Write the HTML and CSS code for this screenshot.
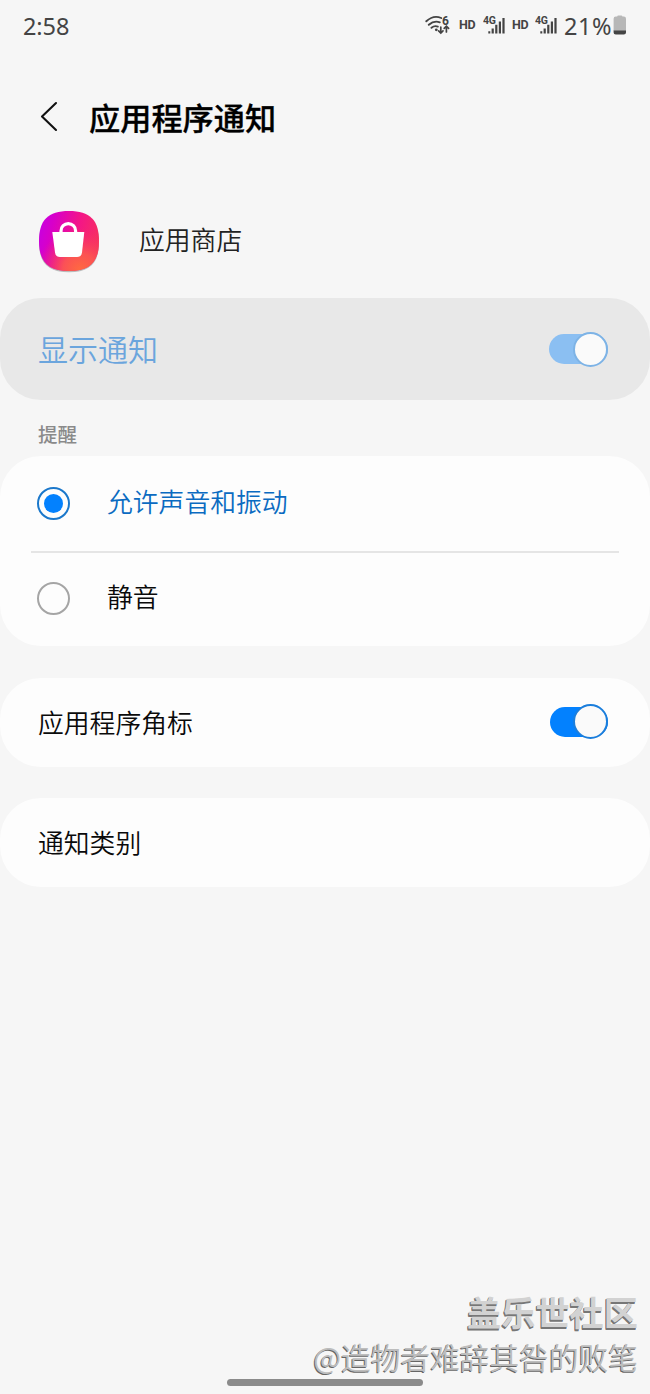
FILE: index.html
```html
<!DOCTYPE html>
<html lang="zh-CN">
<head>
<meta charset="utf-8">
<title>应用程序通知</title>
<link rel="stylesheet" href="styles.css">
</head>
<body>
<div class="screen">
  <header class="status">
    <span class="time">2:58</span>
    <div class="indicators">
      <svg class="wifi" width="25" height="20" viewBox="0 0 25 20" fill="none" stroke="#444" stroke-width="1.9" stroke-linecap="round">
        <path d="M1.3 6.3Q8.5-.4 16.2 3M3.8 9.8Q9 5.2 14.8 7.3M6.5 12.8Q9.5 10.3 12.8 11.6"/>
        <circle cx="11.3" cy="14.8" r="1.4" fill="#444" stroke="none"/>
        <path stroke-width="1.7" d="M15.8 12v5.7M13.6 15.9l2.2 2.2 2.2-2.2M21.4 17V11.3M19.2 13.3l2.2-2.2 2.2 2.2"/>
        <text class="tiny six" x="17" y="9.5">6</text>
      </svg>
      <span class="hd">HD</span>
      <svg class="signal" width="23" height="20" viewBox="0 0 23 20" fill="#444">
        <text class="tiny" x="0" y="8.7" textLength="12.8">4G</text>
        <path d="M5.3 16.3h2v2.2h-2zM8.6 13.5h2.2v5H8.6zM12.2 9.7h2.2v8.8h-2.2zM15.8 6.4h2.2v12.1h-2.2zM19.4 3h2.2v15.5h-2.2z"/>
      </svg>
      <span class="hd">HD</span>
      <svg class="signal" width="23" height="20" viewBox="0 0 23 20" fill="#444">
        <text class="tiny" x="0" y="8.7" textLength="12.8">4G</text>
        <path d="M5.3 16.3h2v2.2h-2zM8.6 13.5h2.2v5H8.6zM12.2 9.7h2.2v8.8h-2.2zM15.8 6.4h2.2v12.1h-2.2zM19.4 3h2.2v15.5h-2.2z"/>
      </svg>
      <span class="percent">21%</span>
      <svg class="battery" width="14" height="20" viewBox="0 0 14 20">
        <path fill="#b7b7b7" d="M4.2 1.6Q4.2.4 5.4.4h2.8q1.2 0 1.2 1.2h1.4Q13 1.6 13 3.8V16H.6V3.8Q.6 1.6 2.8 1.6z"/>
        <path fill="#444" d="M.6 15.6H13v1.9q0 2-2.2 2h-8q-2.2 0-2.2-2z"/>
      </svg>
    </div>
  </header>

  <div class="titlebar">
    <svg class="back" width="20" height="32" viewBox="0 0 20 32" fill="none" stroke="#111" stroke-width="2.1" stroke-linecap="round" stroke-linejoin="round"><path d="M17 2L3 15.5 17 29"/></svg>
    <h1 class="title">应用程序通知</h1>
  </div>

  <div class="app">
    <svg class="app-icon" width="64" height="66" viewBox="0 0 64 66">
      <defs>
        <linearGradient id="base" x1="0" y1=".3" x2="1" y2=".55">
          <stop offset="0" stop-color="#c800e0"/><stop offset=".2" stop-color="#d800c8"/><stop offset=".6" stop-color="#f31588"/><stop offset="1" stop-color="#f7305f"/>
        </linearGradient>
        <radialGradient id="glow" cx=".68" cy=".98" r=".7">
          <stop offset="0" stop-color="#ff6a40"/><stop offset=".4" stop-color="#fc5850" stop-opacity=".9"/><stop offset="1" stop-color="#f7305f" stop-opacity="0"/>
        </radialGradient>
      </defs>
      <path transform="translate(0 1.2)" fill="#bbb" d="M32 2C53 2 62 11 62 32S53 62 32 62 2 53 2 32 11 2 32 2z"/>
      <path fill="url(#base)" d="M32 2C53 2 62 11 62 32S53 62 32 62 2 53 2 32 11 2 32 2z"/>
      <path fill="url(#glow)" d="M32 2C53 2 62 11 62 32S53 62 32 62 2 53 2 32 11 2 32 2z"/>
      <path fill="#fff" d="M15.3 23H47.3L45 43.6Q44.4 48 40 48H23Q18.6 48 18 43.6z"/>
      <path fill="none" stroke="#fff" stroke-width="3.2" d="M24 24v-2.1a7.3 7.3 0 0 1 14.6 0V24"/>
    </svg>
    <span class="label app-name">应用商店</span>
  </div>

  <section class="card main-switch">
    <span class="main-label">显示通知</span>
    <span class="toggle muted"><span class="knob"></span></span>
  </section>

  <h2 class="section-title">提醒</h2>

  <section class="card options">
    <div class="option selected"><span class="radio"></span><span class="label">允许声音和振动</span></div>
    <div class="option"><span class="radio"></span><span class="label">静音</span></div>
  </section>

  <section class="card row">
    <span class="label">应用程序角标</span>
    <span class="toggle"><span class="knob"></span></span>
  </section>

  <section class="card row"><span class="label">通知类别</span></section>

  <footer class="footer">
    <div class="community">盖乐世社区</div>
    <div class="author">@造物者难辞其咎的败笔</div>
    <div class="home-bar"></div>
  </footer>
</div>
</body>
</html>
```
FILE: styles.css
```css
* { box-sizing: border-box; }
body { margin: 0; background: #f6f6f6; color: #0a0a0a; font-family: "Noto Sans CJK SC", sans-serif; }
.screen { width: 650px; height: 1394px; display: flex; flex-direction: column; overflow: hidden; }
.status { height: 50px; flex: none; display: flex; align-items: center; justify-content: space-between; padding: 0 22px 0 23px; color: #444; font-family: Roboto, sans-serif; }
.time { font: 23.5px/50px "Noto Sans", sans-serif; padding-top: 1px; letter-spacing: -.1px; }
.indicators { display: flex; align-items: center; }
.hd { font-size: 12.5px; line-height: 20px; font-weight: 700; width: 16px; margin: -1px 8px 0 9px; white-space: nowrap; letter-spacing: -.4px; }
.signal { margin-top: -1px; }
.signal + .hd { margin: -1px 7px 0 6px; }
.wifi { margin-top: -1px; }
.tiny { font: 700 10.5px Roboto, sans-serif; fill: #444; stroke: none; }
.six { font-size: 12px; }
.percent { font: 23.5px/50px "Noto Sans", sans-serif; margin-left: 6px; padding-top: 1px; letter-spacing: .5px; }
.battery { margin: -1px 1px 0 1px; }
.titlebar { height: 134px; flex: none; display: flex; align-items: center; padding-left: 39px; }
.title { margin: -1px 0 0 30px; font-size: 31.2px; line-height: 46px; font-weight: 500; color: #000; -webkit-text-stroke: .3px #000; }
.app { height: 114px; flex: none; display: flex; align-items: center; padding: 2px 0 0 37px; }
.app-name { margin: -7px 0 0 38px; color: #222; }
.label { font-size: 25.8px; line-height: 38px; font-weight: 350; }
.card { flex: none; background: #fdfdfd; border-radius: 41px; }
.main-switch { height: 102px; background: #e8e8e8; display: flex; align-items: center; justify-content: space-between; padding: 0 42px 0 38px; }
.main-label { margin-top: -2px; font-size: 30px; line-height: 44px; color: #6ba5dd; font-weight: 350; }
.toggle { width: 58px; height: 30px; border-radius: 15px; background: #0381fe; display: flex; align-items: center; justify-content: flex-end; }
.knob { width: 35px; height: 35px; flex: none; border-radius: 50%; border: 2px solid #1b7edc; background: #fafafa; }
.muted { width: 59px; background: #8bbff2; }
.muted .knob { border-color: #7db3e6; }
.row .toggle { margin-top: -2px; }
.section-title { flex: none; height: 56px; margin: 0; padding: 6px 0 0 38px; font-size: 19.5px; line-height: 56px; font-weight: 500; color: #8a8a8a; }
.options { height: 190px; }
.option { height: 95px; display: flex; align-items: center; padding-left: 37px; }
.option .label { margin: -5px 0 0 37px; }
.option + .option { height: 94px; margin: 0 31px; padding-left: 6px; border-top: 2px solid #e5e5e5; }
.option + .option .radio { margin-top: -1px; }
.option + .option .label { margin-top: -6px; }
.radio { width: 33px; height: 33px; border: 2px solid #a5a5a5; border-radius: 50%; display: grid; place-items: center; }
.selected { color: #0b6bc1; }
.selected .radio { border-color: #1b78cb; }
.selected .radio::after { content: ""; width: 19px; height: 19px; border-radius: 50%; background: #0381fe; }
.row { height: 89px; margin-top: 32px; display: flex; align-items: center; justify-content: space-between; padding: 0 42px 0 38px; }
.row .label { margin-top: -1px; }
.row + .row { margin-top: 31px; }
.footer { margin-top: auto; position: relative; text-align: right; padding-right: 12px; height: 107px; }
.community { font-size: 34.2px; line-height: 48px; font-weight: 700; color: #d2d2d2; text-shadow: -1px 1px #777, -1px 2px #777; }
.author { font-size: 29.7px; line-height: 44px; font-weight: 350; color: #bdbdbd; text-shadow: -1px 1px #666; }
.home-bar { position: absolute; left: 227px; bottom: 8px; width: 196px; height: 7px; border-radius: 4px; background: #8b8b8b; }
```
